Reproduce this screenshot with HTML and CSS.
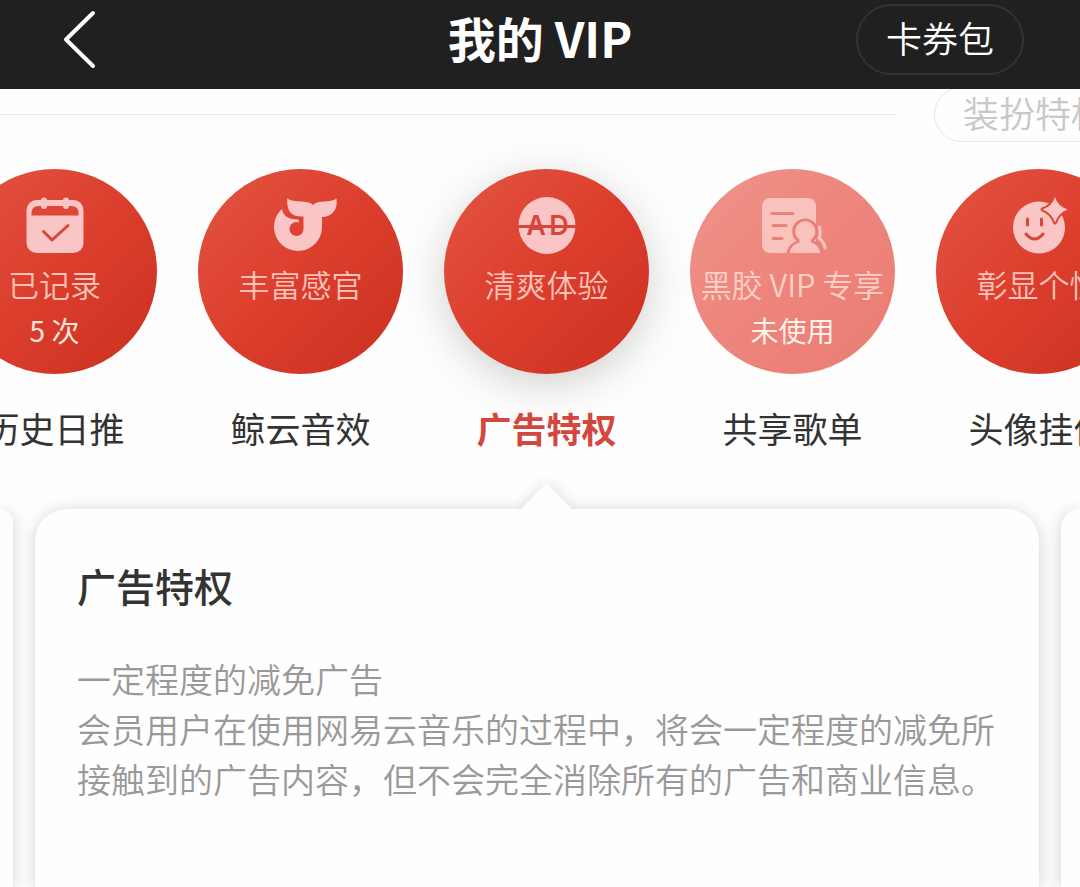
FILE: index.html
```html
<!DOCTYPE html>
<html lang="zh-CN">
  <head>
    <meta charset="utf-8">
    <meta name="viewport" content="width=device-width, initial-scale=1">
    <title>我的 VIP</title>
    <link rel="stylesheet" href="styles.css">
  </head>
  <body>
    <header class="header">
      <button class="back-button" aria-label="返回">
        <svg width="40" height="60" viewBox="0 0 40 60">
          <path d="M33 3 L6 29.500 L33 56" />
        </svg>
      </button>
      <h1 class="header-title">我的 VIP</h1>
      <button class="coupon-button">卡券包</button>
    </header>

    <div class="category-bar">
      <div class="category-line"></div>
      <button class="category-pill">装扮特权</button>
    </div>

    <nav class="privileges">
      <button class="privilege">
        <span class="privilege-circle">
          <svg class="privilege-icon" viewBox="0 0 64 64">
            <rect x="3.500" y="6" width="57" height="53" rx="10" />
            <path class="cut" d="M8.500 21.500 V19 Q8.500 12 16 12 H48 Q55.500 12 55.500 19 V21.500 Z" />
            <path class="draw" d="M21 6.500 V12 M43 6.500 V12" stroke-width="6" />
            <path class="line" d="M20.500 37.500 L29 46 L45 31.500" />
          </svg>
          <span class="privilege-tag">已记录</span>
          <span class="privilege-state">5 次</span>
        </span>
        <span class="privilege-name">历史日推</span>
      </button>

      <button class="privilege">
        <span class="privilege-circle">
          <svg class="privilege-icon" viewBox="0 0 64 64">
            <path d="M18.200 4.500 C25 9.500 39 5 44.200 11 C49 5 61 9.500 67.500 4.500 C69 16 63 22.500 53 23 V33 A24 24 0 1 1 13 15 C14 21 18 25.500 29.500 25.500 L30 28.500 A7 7 0 1 0 34.500 35 V22.500 C23 23 17.500 18 18.200 4.500 Z" />
          </svg>
          <span class="privilege-tag">丰富感官</span>
        </span>
        <span class="privilege-name">鲸云音效</span>
      </button>

      <button class="privilege active">
        <span class="privilege-circle">
          <svg class="privilege-icon" viewBox="0 0 64 64">
            <circle cx="32" cy="31.500" r="28.500" />
            <path class="line" d="M4 32.500 H60" />
            <text class="ad-text" x="21" y="41" text-anchor="middle">A</text>
            <text class="ad-text" x="44" y="41" text-anchor="middle">D</text>
          </svg>
          <span class="privilege-tag">清爽体验</span>
        </span>
        <span class="privilege-name">广告特权</span>
      </button>

      <button class="privilege unused">
        <span class="privilege-circle">
          <svg class="privilege-icon" viewBox="0 0 64 64">
            <rect x="1" y="4" width="54" height="55" rx="8" />
            <path class="line" d="M11 19.500 H32 M12 31.500 H25 M12 44.500 H21" />
            <path class="cut" d="M25.500 59 Q27 50.500 35.500 47 A13 13 0 1 1 53 47 Q61 50.500 62.500 59 Z" />
            <path d="M28.500 59 Q29.500 51 38.500 48.500 V45.500 A10 10 0 1 1 50 45.500 V48.500 Q58.500 51 59.500 59 Z" />
            <path class="draw" d="M58.500 33 Q60 40 58 44 Q63 48 64 54" stroke-width="3" />
          </svg>
          <span class="privilege-tag">黑胶 VIP 专享</span>
          <span class="privilege-state">未使用</span>
        </span>
        <span class="privilege-name">共享歌单</span>
      </button>

      <button class="privilege">
        <span class="privilege-circle">
          <svg class="privilege-icon" viewBox="0 0 64 64">
            <circle cx="32" cy="33.500" r="26" />
            <path class="line" d="M20.500 25 V31 M34.500 25 V31 M19 40 Q27.500 50 36 40" />
            <path class="star" d="M48 3 Q50.500 12 60.500 15.500 Q51.500 19 48 28.500 Q44.500 19 35.500 15.500 Q45.500 12 48 3 Z" />
          </svg>
          <span class="privilege-tag">彰显个性</span>
        </span>
        <span class="privilege-name">头像挂件</span>
      </button>
    </nav>

    <main class="cards">
      <div class="card card-prev"></div>
      <article class="card card-current">
        <h2 class="card-title">广告特权</h2>
        <p class="card-text">一定程度的减免广告<br>会员用户在使用网易云音乐的过程中，将会一定程度的减免所接触到的广告内容，但不会完全消除所有的广告和商业信息。</p>
      </article>
      <div class="card card-next"></div>
    </main>
  </body>
</html>
```

FILE: styles.css
```css
* {
  margin: 0;
  padding: 0;
  box-sizing: border-box;
}

body {
  font-family: "Noto Sans CJK SC", "Noto Sans", sans-serif;
  display: flex;
  flex-direction: column;
  min-height: 100vh;
  overflow-x: hidden;
  background-color: #fefefe;
  color: #333;
}

button {
  font-family: inherit;
  border: none;
  background: none;
  cursor: pointer;
}

/* Header */
.header {
  position: relative;
  z-index: 1;
  display: grid;
  grid-template-columns: 1fr auto 1fr;
  align-items: center;
  padding: 4px 56px 14px;
  background-color: #202020;
  color: #fff;
}

.back-button {
  justify-self: start;
  display: flex;
  padding: 0 4px;
}

.back-button svg {
  fill: none;
  stroke: #fff;
  stroke-width: 4;
  stroke-linecap: round;
  stroke-linejoin: round;
}

.header-title {
  padding-bottom: 6px;
  font-size: 48px;
  font-weight: 700;
  line-height: 50px;
}

.coupon-button {
  justify-self: end;
  height: 71px;
  padding: 0 28px 5px;
  border: 2px solid #333;
  border-radius: 36px;
  color: #fff;
  font-size: 36px;
  font-weight: 350;
}

/* Category row, slides under the header */
.category-bar {
  display: flex;
  align-items: center;
  gap: 38px;
  margin-top: -2px;
  margin-right: -56px;
}

.category-line {
  flex: 1;
  height: 1px;
  background-color: #e6e6e6;
}

.category-pill {
  height: 55px;
  padding: 0 28px 5px;
  border: 1px solid #e6e6e6;
  border-radius: 28px;
  color: #c8c8c8;
  font-size: 36px;
  font-weight: 350;
  line-height: 48px;
}

/* Privileges */
.privileges {
  display: flex;
  justify-content: center;
  gap: 41px;
  padding: 27px 0 56px 13px;
}

.privilege {
  flex: none;
  width: 205px;
  display: flex;
  flex-direction: column;
  align-items: center;
}

.privilege-circle {
  display: flex;
  flex-direction: column;
  align-items: center;
  width: 205px;
  height: 205px;
  padding-top: 25px;
  border-radius: 50%;
  background: linear-gradient(135deg, #e2503e 10%, #dc3e2d 50%, #cd3323 90%);
  white-space: nowrap;
}

.privilege-icon {
  width: 64px;
  height: 64px;
  overflow: visible;
  fill: #f9c6c5;
}

.privilege-icon .cut {
  fill: #df4636;
}

.privilege-icon .line {
  fill: none;
  stroke: #d8463b;
  stroke-width: 3;
  stroke-linecap: round;
  stroke-linejoin: round;
}

.privilege-icon .draw {
  fill: none;
  stroke: #f9c6c5;
  stroke-linecap: round;
}

.privilege-icon .star {
  stroke: #df4636;
  stroke-width: 4;
  stroke-linejoin: round;
  paint-order: stroke;
}

.ad-text {
  fill: #d8463b;
  font-family: Inter, sans-serif;
  font-size: 27px;
  font-weight: 600;
}

.privilege-tag {
  margin-top: 6px;
  color: #fbc1b8;
  font-size: 31px;
  font-weight: 350;
  line-height: 40px;
}

.privilege-state {
  margin-top: 6px;
  color: #fde3dc;
  font-size: 28px;
  font-weight: 400;
  line-height: 40px;
}

.privilege-name {
  margin-top: 29px;
  color: #333;
  font-size: 35px;
  line-height: 50px;
}

.privilege.active .privilege-circle {
  box-shadow: 0 10px 44px rgba(60, 64, 50, 0.24);
}

.privilege.active .privilege-name {
  color: #d4473f;
  font-weight: 700;
}

.privilege.unused .privilege-circle {
  background: linear-gradient(135deg, #ee9086 10%, #ee857c 50%, #e97e74 90%);
}

.privilege.unused .privilege-icon {
  fill: #f9c2bc;
}

.privilege.unused .cut {
  fill: #ea7f76;
}

.privilege.unused .line {
  stroke: #ea827a;
}

.privilege.unused .draw {
  stroke: #f9c2bc;
}

.privilege.unused .privilege-tag {
  color: #fbd0c6;
}

.privilege.unused .privilege-state {
  color: #fff0e8;
}

/* Cards */
.cards {
  flex: 1;
  display: grid;
  grid-template-columns: 13px 1fr 19px;
  gap: 22px;
}

.card {
  background-color: #fefefe;
  filter: drop-shadow(0 2px 8px rgba(0, 0, 0, 0.18));
}

.card-prev {
  border-radius: 0 32px 0 0;
}

.card-next {
  border-radius: 32px 0 0 0;
}

.card-current {
  position: relative;
  padding: 51px 40px 54px 42px;
  border-radius: 32px 32px 0 0;
}

/* arrow pointing at the active privilege */
.card-current::before {
  content: "";
  position: absolute;
  top: -18px;
  left: calc(50% - 9px);
  width: 37px;
  height: 37px;
  border-radius: 3px;
  background-color: #fefefe;
  transform: rotate(45deg);
}

.card-title {
  font-size: 39px;
  font-weight: 500;
  line-height: 50px;
}

.card-text {
  margin-top: 44px;
  color: #999;
  font-size: 34px;
  font-weight: 350;
  line-height: 50px;
}
```
